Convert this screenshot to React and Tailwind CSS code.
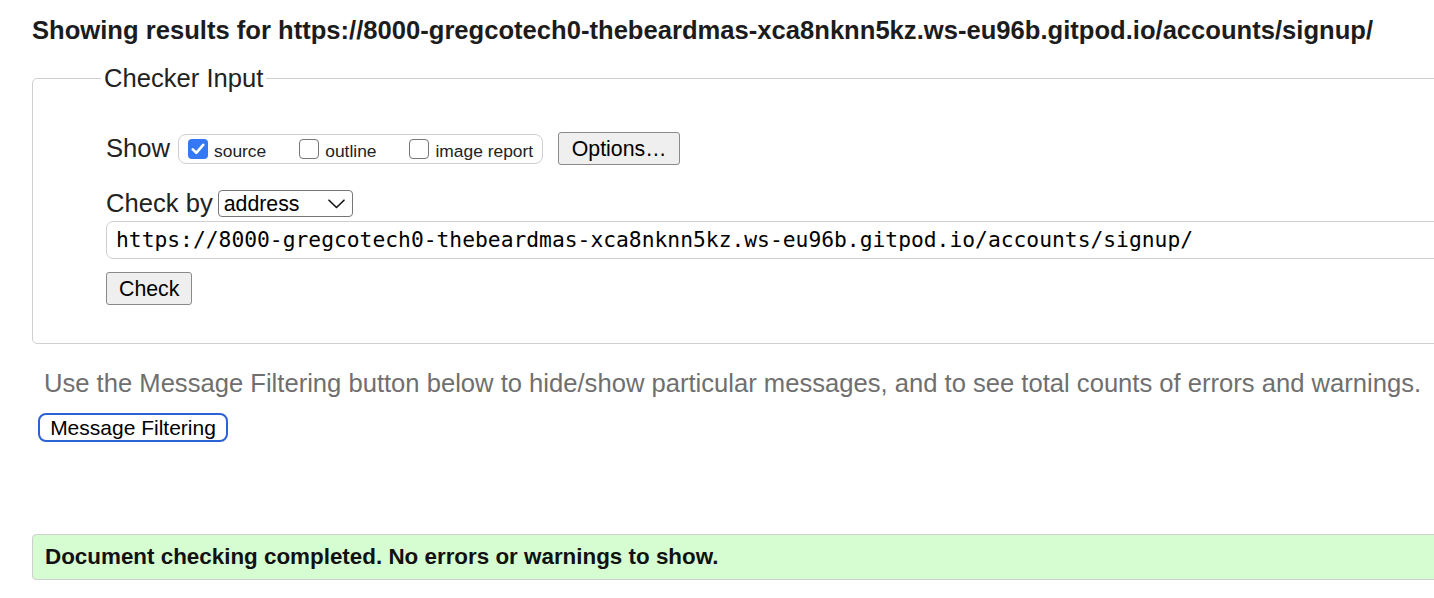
import React from 'react';

const URL = 'https://8000-gregcotech0-thebeardmas-xca8nknn5kz.ws-eu96b.gitpod.io/accounts/signup/';

const Checkbox = ({ checked }) =>
  checked ? (
    <span className="flex h-[20px] w-[20px] items-center justify-center rounded-[4px] bg-[#3478f6]">
      <svg width="14" height="12" viewBox="0 0 14 12" fill="none">
        <path d="M1.8 6.4 L5.3 9.8 L12.2 1.8" stroke="#fff" strokeWidth="2.6" strokeLinecap="round" strokeLinejoin="round" />
      </svg>
    </span>
  ) : (
    <span className="h-[20px] w-[20px] rounded-[4px] border border-[#767676] bg-white" />
  );

const ShowOption = ({ label, checked }) => (
  <span className="flex items-center gap-[6px]">
    <Checkbox checked={checked} />
    <span className="mt-[5px] text-[17.4px] leading-[20px] text-[#222]">{label}</span>
  </span>
);

const GrayButton = ({ children, className = '' }) => (
  <button
    type="button"
    className={`h-[33px] rounded-[3px] border border-[#8a8a8a] bg-[#efefef] px-[12px] text-[21.3px] leading-[24px] text-black ${className}`}
  >
    {children}
  </button>
);

export default function App() {
  return (
    <div className="h-[598px] w-[1434px] overflow-hidden bg-white font-['Liberation_Sans',Arial,sans-serif] text-[#222]">
      <div className="w-[1520px] pl-[32px] pt-[16px]">
        <h2 className="h-[29px] text-[25.6px] font-bold leading-[29px] text-[#1c1c1c]">
          Showing results for {URL}
        </h2>

        <fieldset className="mt-[19px] rounded-[5px] border border-[#cfcfcf] pb-[38px] pl-[68px]">
          <legend className="px-[3px] text-[25.6px] leading-[29px] text-[#222]">Checker Input</legend>
          <div className="pl-[5px]">
            <div className="mt-[39px] flex h-[33px] items-center">
              <span className="text-[25.6px] leading-[29px]">Show</span>
              <div className="ml-[8px] flex h-[30px] items-center gap-[33px] rounded-[8px] border border-[#cfcfcf] pl-[9px] pr-[9px]">
                <ShowOption label="source" checked />
                <ShowOption label="outline" />
                <ShowOption label="image report" />
              </div>
              <GrayButton className="ml-[15px] w-[122px]">Options…</GrayButton>
            </div>

            <div className="mt-[24px] flex h-[29px] items-center">
              <span className="text-[25.6px] leading-[29px]">Check by</span>
              <div className="ml-[5px] flex h-[27px] w-[135px] items-center justify-between rounded-[4px] border border-[#767676] bg-white pl-[5px] pr-[7px]">
                <span className="text-[21.3px] leading-[24px] text-black">address</span>
                <svg width="17" height="10" viewBox="0 0 17 10" fill="none">
                  <path d="M1 1.2 L8.5 8.5 L16 1.2" stroke="#111" strokeWidth="1.6" strokeLinecap="round" strokeLinejoin="round" />
                </svg>
              </div>
            </div>

            <div className="mt-[3px] flex h-[38px] items-center rounded-[7px] border border-[#cfcfcf] pl-[9px]">
              <span className="font-['DejaVu_Sans_Mono',Menlo,monospace] text-[21.3px] leading-[24px] text-black">{URL}</span>
            </div>

            <GrayButton className="mt-[13px] w-[86px]">Check</GrayButton>
          </div>
        </fieldset>

        <p className="ml-[12px] mt-[25px] text-[25.6px] leading-[29px] text-[#6f6f6f]">
          Use the Message Filtering button below to hide/show particular messages, and to see total counts of errors and warnings.
        </p>

        <button
          type="button"
          className="ml-[6px] mt-[15px] h-[29px] w-[190px] rounded-[8px] border-2 border-[#2b63d6] bg-white text-[21px] leading-[24px] text-black"
        >
          Message Filtering
        </button>

        <div className="mt-[92px] flex h-[46px] items-center rounded-[4px] border border-[#cfcfcf] bg-[#d6fcd2] pl-[12px]">
          <span className="text-[22.4px] font-bold leading-[26px] text-[#111]">
            Document checking completed. No errors or warnings to show.
          </span>
        </div>
      </div>
    </div>
  );
}
